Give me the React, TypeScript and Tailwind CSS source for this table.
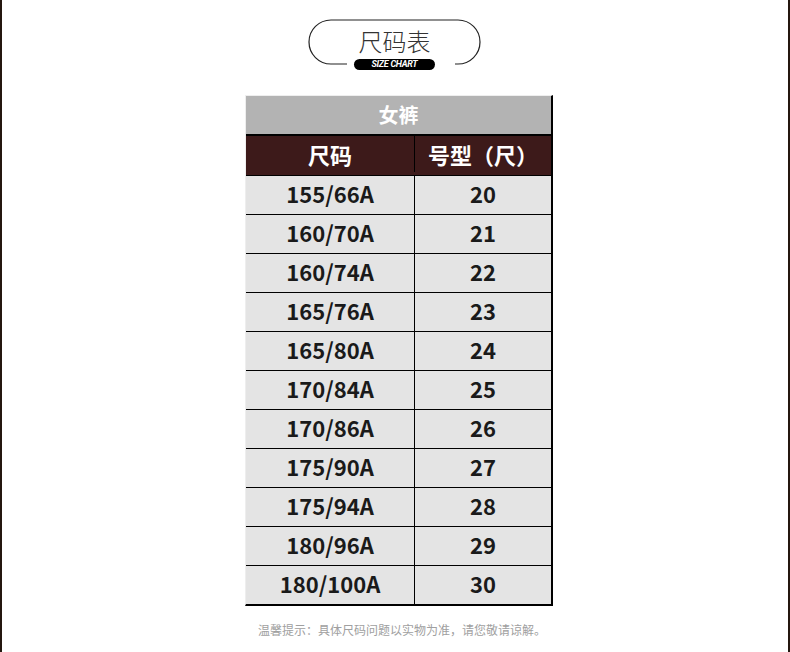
const rows: [string, string][] = [
  ["155/66A", "20"],
  ["160/70A", "21"],
  ["160/74A", "22"],
  ["165/76A", "23"],
  ["165/80A", "24"],
  ["170/84A", "25"],
  ["170/86A", "26"],
  ["175/90A", "27"],
  ["175/94A", "28"],
  ["180/96A", "29"],
  ["180/100A", "30"],
];

const cjk = "font-['Noto_Sans_CJK_SC','Noto_Sans',sans-serif]";

function TitleBadge() {
  return (
    <div className="relative ml-[305px] h-[56px] w-[175px]">
      <svg width="175" height="56" viewBox="0 0 175 56" className="absolute left-0 top-0">
        <path
          d="M40 46 L24 46 A22 22 0 0 1 24 2 L151 2 A22 22 0 0 1 151 46 L148 46"
          fill="none"
          stroke="#222"
          strokeWidth="1.2"
        />
      </svg>
      <div className={`absolute left-0 top-[8px] w-full text-center text-[24px] font-light leading-[30px] text-[#333] ${cjk}`}>
        尺码表
      </div>
      <div className="absolute left-[47px] top-[41px] flex h-[11px] w-[81px] items-center justify-center rounded-full bg-black">
        <span className="font-['Roboto','Liberation_Sans',sans-serif] text-[9px] font-bold italic leading-none tracking-[-0.3px] text-white">
          SIZE CHART
        </span>
      </div>
    </div>
  );
}

export default function App() {
  return (
    <div className={`relative h-[652px] w-[790px] overflow-hidden border-x-2 border-[#24170f] bg-white ${cjk}`}>
      <div className="pt-[18px]">
        <TitleBadge />
      </div>

      <div className="ml-[243px] mt-[21px] w-[308px] border-l border-t border-[#eeeeee] border-r-2 border-b-2 border-r-black border-b-black">
        <div className="flex h-[38px] items-center justify-center bg-[#b3b3b3] pb-[1px] text-[20px] font-bold text-white">
          女裤
        </div>
        <div className="grid h-[41px] grid-cols-[169px_1fr] border-t-2 border-black bg-[#3d1a1a] pb-[3px] text-[22px] font-bold text-white">
          <div className="flex items-center justify-center border-r border-black">尺码</div>
          <div className="flex items-center justify-center">号型（尺）</div>
        </div>
        {rows.map(([size, no]) => (
          <div
            key={size}
            className="grid h-[39px] grid-cols-[169px_1fr] border-t border-black bg-[#e4e4e4] text-[22px] font-bold text-[#1a1a1a]"
          >
            <div className="flex items-center justify-center border-r border-black pb-[3px]">{size}</div>
            <div className="flex items-center justify-center pb-[3px]">{no}</div>
          </div>
        ))}
      </div>

      <div className="mt-[15px] pl-[14px] text-center text-[12px] text-[#a0a0a0]">
        温馨提示：具体尺码问题以实物为准，请您敬请谅解。
      </div>
    </div>
  );
}
